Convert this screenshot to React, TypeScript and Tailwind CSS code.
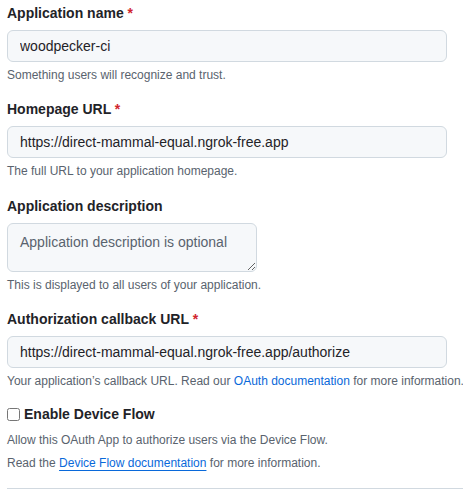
const fieldClass =
  "block h-8 w-[440px] rounded-md border border-[#d1d9e0] bg-[#f6f8fa] px-3 text-sm text-[#1f2328] outline-none";

function Label({ text, required }: { text: string; required?: boolean }) {
  return (
    <label className="mb-[7px] block text-sm font-bold leading-5 text-[#1f2328]">
      {text}
      {required && <span className="text-[#d1242f]"> *</span>}
    </label>
  );
}

function Note({ children }: { children: React.ReactNode }) {
  return (
    <p className="mt-1 whitespace-nowrap text-xs leading-[18px] text-[#59636e]">{children}</p>
  );
}

export default function App() {
  return (
    <div className="min-h-screen overflow-hidden bg-white pl-[7px] pt-[3px] font-['Liberation_Sans',Arial,sans-serif]">
      <div>
        <Label text="Application name" required />
        <input className={fieldClass} defaultValue="woodpecker-ci" />
        <Note>Something users will recognize and trust.</Note>
      </div>

      <div className="mt-[15px]">
        <Label text="Homepage URL" required />
        <input className={fieldClass} defaultValue="https://direct-mammal-equal.ngrok-free.app" />
        <Note>The full URL to your application homepage.</Note>
      </div>

      <div className="mt-4">
        <Label text="Application description" />
        <textarea
          className="block h-[49px] w-[250px] rounded-md border border-[#d1d9e0] bg-[#f6f8fa] px-3 py-2 text-sm leading-5 text-[#1f2328] outline-none placeholder:text-[#59636e]"
          placeholder="Application description is optional"
        />
        <Note>This is displayed to all users of your application.</Note>
      </div>

      <div className="mt-[15px]">
        <Label text="Authorization callback URL" required />
        <input
          className={fieldClass}
          defaultValue="https://direct-mammal-equal.ngrok-free.app/authorize"
        />
        <Note>
          Your application’s callback URL. Read our{" "}
          <a href="#" className="text-[#0969da]">
            OAuth documentation
          </a>{" "}
          for more information.
        </Note>
      </div>

      <div className="mt-[14px]">
        <label className="flex items-center gap-1 text-sm font-bold leading-5 text-[#1f2328]">
          <input type="checkbox" className="m-0 h-[13px] w-[13px]" />
          Enable Device Flow
        </label>
        <p className="mt-[7px] text-xs leading-[18px] text-[#59636e]">
          Allow this OAuth App to authorize users via the Device Flow.
        </p>
        <p className="mt-[5px] text-xs leading-[18px] text-[#59636e]">
          Read the{" "}
          <a href="#" className="text-[#0969da] underline underline-offset-[3px]">
            Device Flow documentation
          </a>{" "}
          for more information.
        </p>
      </div>

      <hr className="mt-4 border-t border-[#d1d9e0]" />
    </div>
  );
}
